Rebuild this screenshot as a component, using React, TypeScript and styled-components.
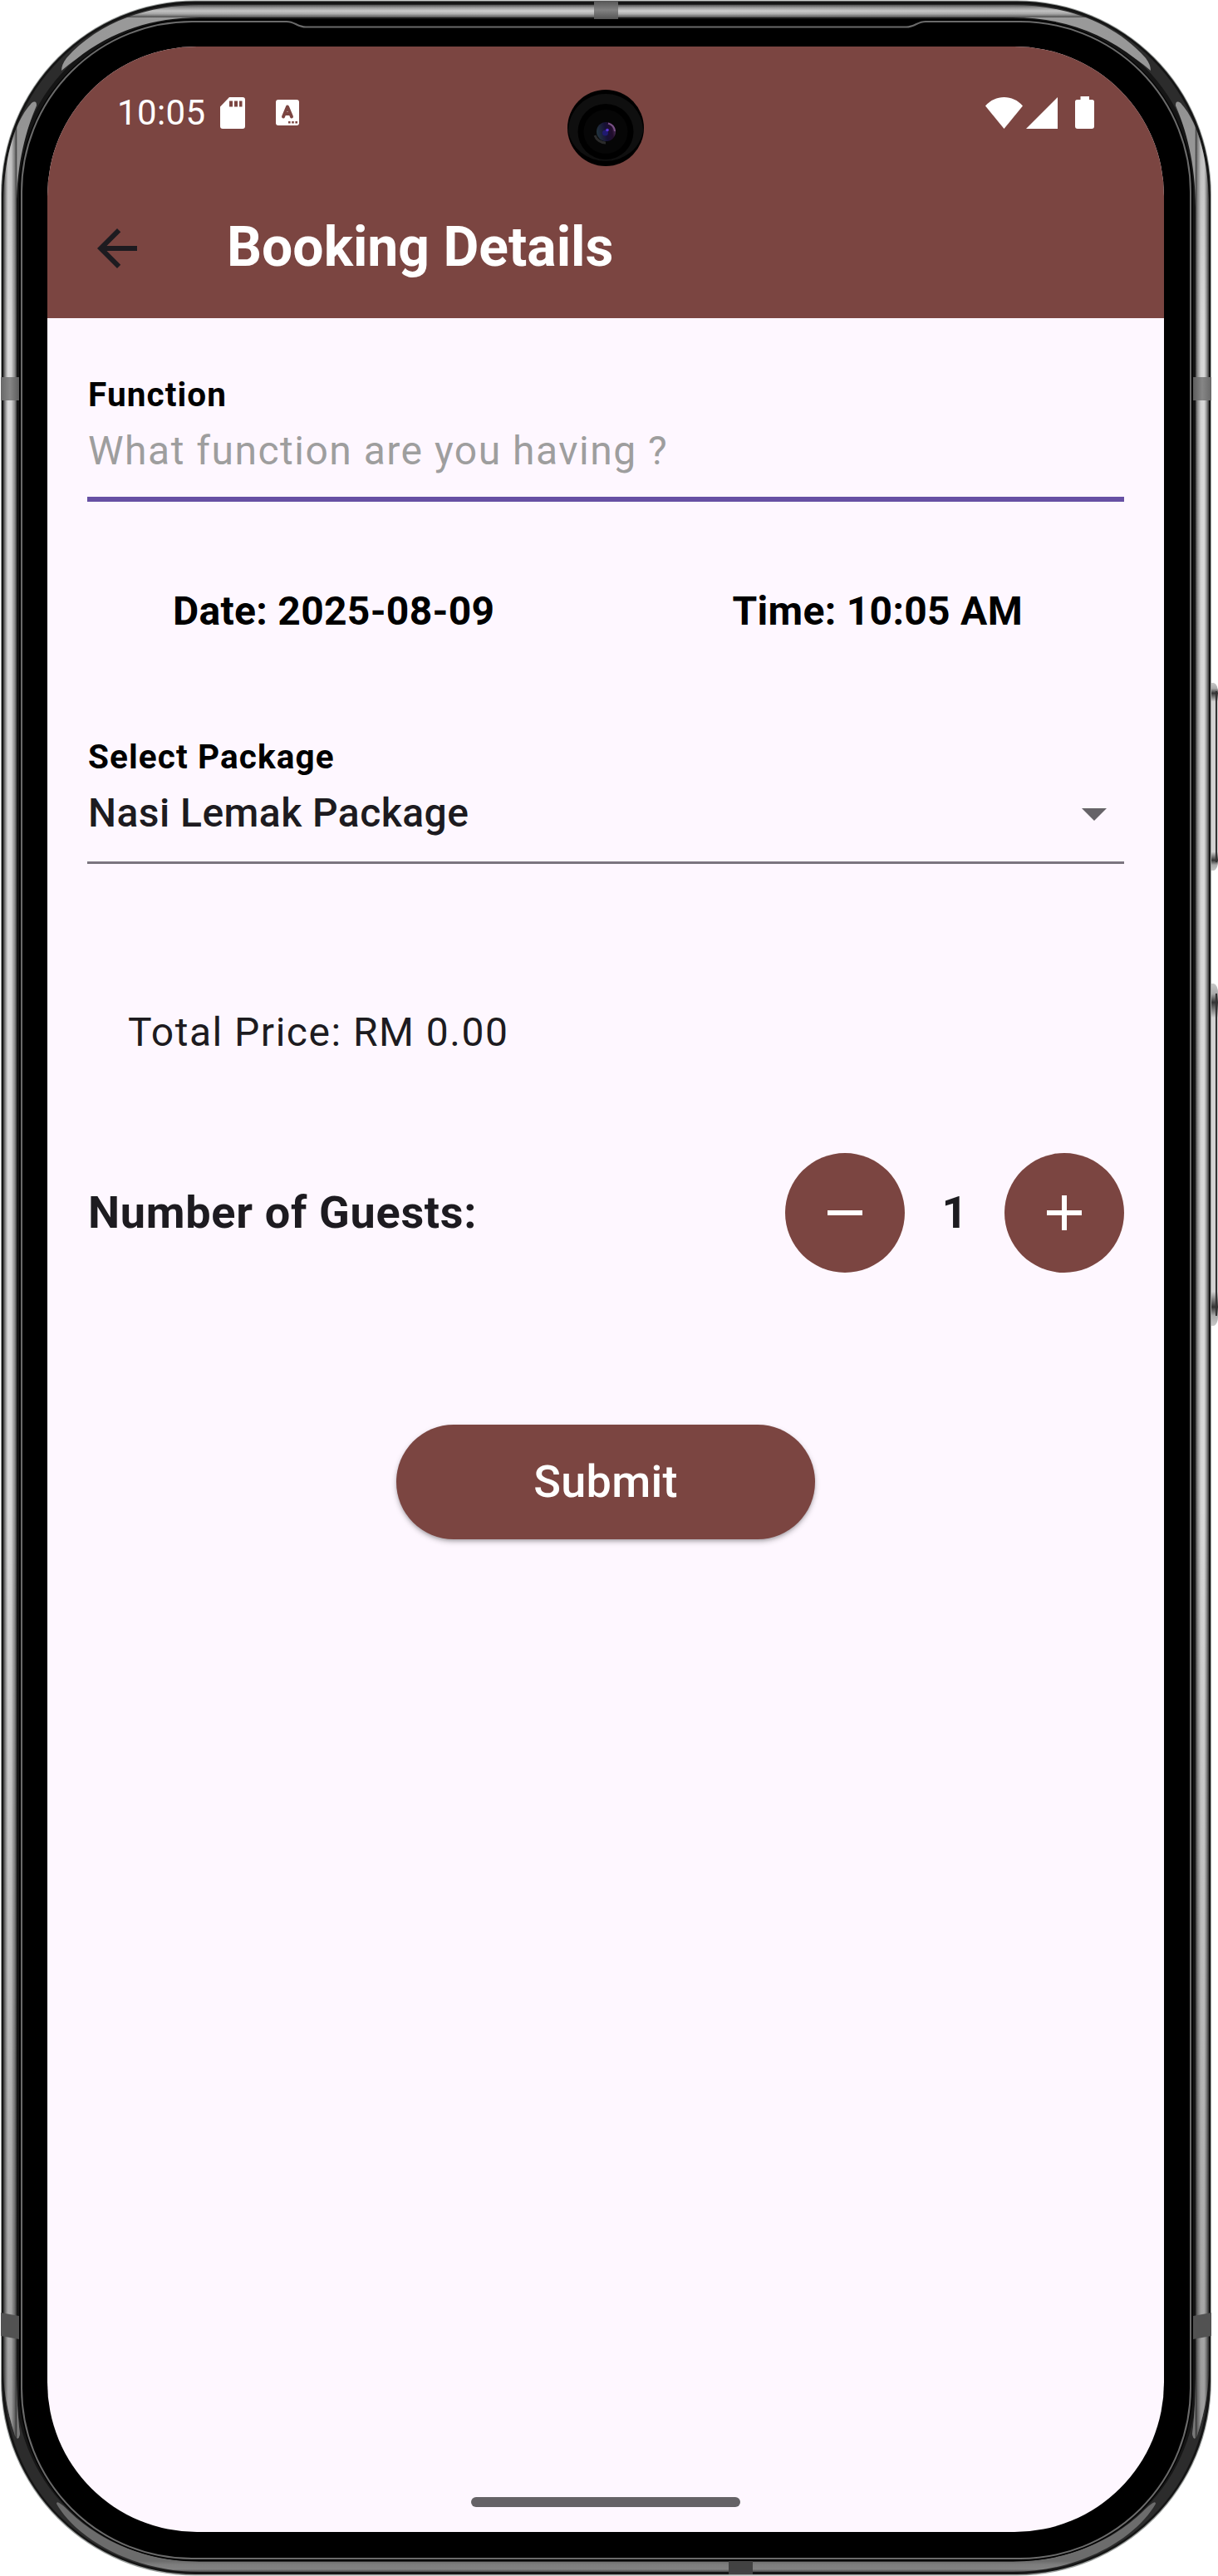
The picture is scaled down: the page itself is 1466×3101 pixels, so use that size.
import React, { useState } from "react";
import styled, { createGlobalStyle } from "styled-components";

const color = {
  brand: "#7b4541",
  surface: "#fef7ff",
  ink: "#1d1b20",
  hint: "#9e9e9e",
  focus: "#6750a4",
  outline: "#7b757f",
  icon: "#666368",
};

const GlobalStyle = createGlobalStyle`
  * { box-sizing: border-box; }
  body { margin: 0; background: #fff; }
`;

const Device = styled.div`
  position: relative;
  width: 1466px;
  height: 3101px;
  padding: 56px 65px 53px 57px;
  overflow: hidden;
  font-family: Roboto, "Liberation Sans", sans-serif;
  font-kerning: normal;
`;

const Casing = styled.svg`
  position: absolute;
  inset: 0;
  width: 1466px;
  height: 3101px;
`;

const Screen = styled.main`
  position: relative;
  display: flex;
  flex-direction: column;
  width: 1344px;
  height: 2992px;
  border-radius: 180px;
  overflow: hidden;
  background: ${color.surface};
  color: ${color.ink};
`;

const Camera = styled.svg`
  position: absolute;
  left: 626px;
  top: 52px;
  width: 92px;
  height: 92px;
`;

const Header = styled.header`
  background: ${color.brand};
  color: #fff;
`;

const StatusBar = styled.div`
  display: flex;
  align-items: center;
  height: 159px;
  padding: 0 84px;
`;

const Clock = styled.span`
  width: 124px;
  font-size: 42px;
  line-height: 50px;
  letter-spacing: 0.4px;
  white-space: nowrap;
`;

const Glyph = styled.svg<{ $w: number; $h: number; $gap?: number }>`
  display: block;
  flex: none;
  width: ${(p) => p.$w}px;
  height: ${(p) => p.$h}px;
  margin-left: ${(p) => p.$gap ?? 0}px;
`;

const Spacer = styled.div`
  flex: 1;
`;

const Toolbar = styled.div`
  display: flex;
  align-items: center;
  gap: 96px;
  height: 168px;
  padding: 0 48px;
`;

const Title = styled.h1`
  margin: 0;
  padding-bottom: 3px;
  font-size: 66px;
  font-weight: 700;
  line-height: 84px;
  white-space: nowrap;
`;

const IconButton = styled.button`
  display: flex;
  padding: 0;
  border: 0;
  background: none;
  color: ${color.ink};
`;

const Form = styled.form`
  display: flex;
  flex-direction: column;
  padding: 68px 48px 0;
`;

const Field = styled.label<{ $line: number; $tone: string; $pad: number }>`
  display: flex;
  flex-direction: column;
  gap: 8px;
  padding-bottom: ${(p) => p.$pad}px;
  border-bottom: ${(p) => p.$line}px solid ${(p) => p.$tone};
`;

const FieldLabel = styled.span`
  padding-left: 1px;
  font-size: 40.5px;
  font-weight: 700;
  line-height: 48px;
  letter-spacing: 1.1px;
  color: #000;
`;

const FieldInput = styled.input`
  display: block;
  width: 100%;
  height: 72px;
  padding: 0 0 0 1px;
  border: 0;
  outline: 0;
  background: none;
  font: 400 48px/72px Roboto, "Liberation Sans", sans-serif;
  letter-spacing: 1.5px;
  color: ${color.ink};
  &::placeholder {
    color: ${color.hint};
    opacity: 1;
  }
`;

const SelectRow = styled.span`
  display: flex;
  align-items: center;
  justify-content: space-between;
  padding-left: 1px;
  font-size: 48px;
  font-weight: 500;
  line-height: 72px;
  letter-spacing: 0.45px;
`;

const Schedule = styled.div`
  display: flex;
  justify-content: space-between;
  margin: 96px 0 115px;
  padding: 0 122px 0 103px;
`;

const ScheduleItem = styled.span`
  font-size: 48px;
  font-weight: 700;
  line-height: 72px;
  letter-spacing: 0.3px;
  white-space: nowrap;
  color: #000;
`;

const Total = styled.p`
  margin: 167px 0 109px;
  padding-left: 49px;
  font-size: 48px;
  line-height: 72px;
  letter-spacing: 1.5px;
`;

const GuestRow = styled.div`
  display: flex;
  align-items: center;
  height: 144px;
  font-size: 54px;
  font-weight: 700;
`;

const GuestLabel = styled.span`
  flex: 1;
  padding: 0 0 2px 1px;
  letter-spacing: 0.7px;
`;

const GuestCount = styled.output`
  width: 120px;
  padding-bottom: 2px;
  text-align: center;
`;

const RoundButton = styled.button`
  display: flex;
  align-items: center;
  justify-content: center;
  width: 144px;
  height: 144px;
  padding: 0;
  border: 0;
  border-radius: 50%;
  background: ${color.brand};
  color: #fff;
`;

const Submit = styled.button`
  align-self: center;
  width: 504px;
  height: 138px;
  margin-top: 183px;
  padding: 0;
  border: 0;
  border-radius: 69px;
  background: ${color.brand};
  box-shadow: 0 3px 6px rgba(0, 0, 0, 0.26), 0 2px 3px rgba(0, 0, 0, 0.1);
  color: #fff;
  font: 500 54px/64px Roboto, "Liberation Sans", sans-serif;
  letter-spacing: 0.3px;
`;

const HomeIndicator = styled.div`
  align-self: center;
  width: 324px;
  height: 12px;
  margin: auto 0 30px;
  border-radius: 6px;
  background: #656266;
`;

/* Half of the metal rim; mirrored for the opposite side. */
function RimHalf() {
  return (
    <g>
      <path d="M4 240 C5 200 14 150 38 124 Q44 120 44 127 C32 155 20 195 20 250 L20 2850 Q20 2900 24 2930 Q22 2940 18 2932 C8 2900 4 2875 4 2850 Z" fill="url(#side)" />
      <path d="M4 240 C5 200 14 150 38 124 Q44 120 44 127 C32 155 20 195 20 250 L20 2850 Q20 2900 24 2930 Q22 2940 18 2932 C8 2900 4 2875 4 2850 Z" fill="url(#sideShade)" />
      <path d="M730 6 L240 6 C180 6 120 25 80 70 Q74 78 74 85 Q82 78 92 71 C135 37 185 21 240 21 L730 21 Z" fill="url(#top)" />
      <path d="M730 6 L240 6 C180 6 120 25 80 70 Q74 78 74 85 Q82 78 92 71 C135 37 185 21 240 21 L730 21 Z" fill="url(#topShade)" />
      <path d="M730 3084 L240 3084 C170 3082 120 3058 84 3024 Q68 3008 68 3014 C92 3056 160 3096 240 3096 L730 3096 Z" fill="url(#bottom)" />
      <rect x="1" y="454" width="22" height="28" fill="url(#band)" />
      <path d="M1 2784 L23 2788 V2816 L1 2812 Z" fill="#525252" />
    </g>
  );
}

function PhoneCasing() {
  return (
    <Casing viewBox="0 0 1466 3101" aria-hidden="true">
      <defs>
        <linearGradient id="side" gradientUnits="userSpaceOnUse" x1="1" y1="0" x2="24" y2="0">
          <stop offset="0.1" stopColor="#2b2b2b" />
          <stop offset="0.28" stopColor="#a8a8a8" />
          <stop offset="0.38" stopColor="#dadada" />
          <stop offset="0.55" stopColor="#d2d2d2" />
          <stop offset="0.72" stopColor="#8c8c8c" />
          <stop offset="0.8" stopColor="#555" />
          <stop offset="0.84" stopColor="#333" />
          <stop offset="0.85" stopColor="#a6a6a6" />
        </linearGradient>
        <linearGradient id="sideShade" gradientUnits="userSpaceOnUse" x1="0" y1="120" x2="0" y2="2940">
          <stop offset="0" stopOpacity="0.12" />
          <stop offset="0.1" stopOpacity="0" />
          <stop offset="0.6" stopOpacity="0" />
          <stop offset="0.93" stopOpacity="0.22" />
          <stop offset="1" stopOpacity="0.28" />
        </linearGradient>
        <linearGradient id="top" gradientUnits="userSpaceOnUse" x1="0" y1="5" x2="0" y2="23">
          <stop offset="0" stopColor="#444" />
          <stop offset="0.25" stopColor="#a0a0a0" />
          <stop offset="0.45" stopColor="#cecece" />
          <stop offset="0.65" stopColor="#b0b0b0" />
          <stop offset="0.88" stopColor="#555" />
          <stop offset="0.9" stopColor="#a4a4a4" />
        </linearGradient>
        <linearGradient id="topShade" gradientUnits="userSpaceOnUse" x1="70" y1="0" x2="600" y2="0">
          <stop offset="0" stopOpacity="0.08" />
          <stop offset="1" stopOpacity="0" />
        </linearGradient>
        <linearGradient id="bottom" gradientUnits="userSpaceOnUse" x1="0" y1="3083" x2="0" y2="3097">
          <stop offset="0" stopColor="#6c6c6c" />
          <stop offset="0.3" stopColor="#7d7d7d" />
          <stop offset="0.7" stopColor="#828282" />
          <stop offset="1" stopColor="#3a3a3a" />
        </linearGradient>
        <linearGradient id="band" x1="0" y1="0" x2="1" y2="0">
          <stop offset="0" stopColor="#686868" />
          <stop offset="0.5" stopColor="#868686" />
          <stop offset="1" stopColor="#5c5c5c" />
        </linearGradient>
        <linearGradient id="bandTop" x1="0" y1="0" x2="0" y2="1">
          <stop offset="0" stopColor="#555" />
          <stop offset="0.5" stopColor="#828282" />
          <stop offset="1" stopColor="#555" />
        </linearGradient>
        <linearGradient id="key" x1="0" y1="0" x2="0" y2="1">
          <stop offset="0" stopColor="#c8c8c8" />
          <stop offset="0.03" stopColor="#aaa" />
          <stop offset="0.055" stopColor="#333" />
          <stop offset="0.1" stopColor="#d2d2d2" />
          <stop offset="0.9" stopColor="#d2d2d2" />
          <stop offset="0.945" stopColor="#333" />
          <stop offset="0.97" stopColor="#aaa" />
          <stop offset="1" stopColor="#c8c8c8" />
        </linearGradient>
      </defs>

      <path d="M1457 822 H1461 Q1466 824 1466 834 V1036 Q1466 1046 1461 1048 H1457 Z" fill="url(#key)" />
      <path d="M1464 832 V1038" stroke="#333" strokeWidth="2" />
      <path d="M1457 1184 H1461 Q1466 1186 1466 1196 V1584 Q1466 1594 1461 1596 H1457 Z" fill="url(#key)" />
      <path d="M1464 1196 V1584" stroke="#333" strokeWidth="2" />

      <rect x="1" y="0.5" width="1457" height="3100" rx="234" fill="#9a9e9c" />
      <rect x="2" y="1.5" width="1455" height="3097.5" rx="233" fill="#151515" />
      <rect x="12" y="11.5" width="1435" height="3078" rx="221" fill="none" stroke="#2c2c2c" strokeWidth="13" />
      <RimHalf />
      <g transform="translate(1459 0) scale(-1 1)">
        <RimHalf />
      </g>
      <rect x="715" y="1" width="29" height="22" fill="url(#bandTop)" />
      <rect x="877" y="3083" width="29" height="16" fill="#424242" />
      <rect x="23" y="23" width="1413" height="3060" rx="210" fill="#000" />
      <path
        d="M26 231 A205 205 0 0 1 231 26 H345 C355 26 358 32.5 368 32.5 H1091 C1101 32.5 1104 26 1114 26 H1228 A205 205 0 0 1 1433 231 V2875 A205 205 0 0 1 1228 3080 H231 A205 205 0 0 1 26 2875 Z"
        fill="none"
        stroke="#6a6a6a"
        strokeWidth="2"
      />
    </Casing>
  );
}

function PunchHole() {
  return (
    <Camera viewBox="683 108 92 92" aria-hidden="true">
      <defs>
        <linearGradient id="lens" x1="0" y1="0.6" x2="1" y2="0.4">
          <stop offset="0" stopColor="#22363f" />
          <stop offset="0.5" stopColor="#161035" />
          <stop offset="0.8" stopColor="#220d2c" />
          <stop offset="1" stopColor="#4c2e57" />
        </linearGradient>
      </defs>
      <circle cx="729" cy="154" r="46" fill="#000" />
      <path d="M684 158 A45 45 0 0 1 774 158 A45.5 42 0 0 1 684 158 Z" fill="#0f0f0f" />
      <circle cx="729" cy="158.5" r="33.5" fill="#000" />
      <circle cx="729" cy="158.5" r="26.5" fill="#060606" />
      <path d="M716 163 A13.5 13.5 0 0 0 729 172" fill="none" stroke="#2b2b2b" strokeWidth="3" />
      <circle cx="729.5" cy="158.5" r="11.5" fill="url(#lens)" />
      <path d="M732 148.5 A11 11 0 0 1 740 158" fill="none" stroke="#7a5286" strokeWidth="2" />
      <circle cx="728.5" cy="160" r="3.5" fill="#1f1a70" />
      <circle cx="731" cy="156.5" r="1.8" fill="#5a35d8" />
    </Camera>
  );
}

export default function App() {
  const [guests, setGuests] = useState(1);
  const [fn, setFn] = useState("");

  return (
    <>
      <GlobalStyle />
      <Device>
        <PhoneCasing />
        <Screen>
          <Header>
            <StatusBar>
              <Clock>10:05</Clock>
              <Glyph $w={30} $h={38} viewBox="0 0 30 38">
                <path fillRule="evenodd" fill="#fff" d="M11 0H27a3 3 0 0 1 3 3V35a3 3 0 0 1-3 3H3a3 3 0 0 1-3-3V11.500ZM11 4.500V11.500H15V4.500ZM17 4.500V11.500H21V4.500ZM23 4.500V11.500H26.500V4.500Z" />
              </Glyph>
              <Glyph $w={28} $h={31} $gap={37} viewBox="0 0 28 31">
                <rect width="28" height="31" rx="3" fill="#fff" />
                <path d="M9 20.500L14 8.500L19 20.500M11 17H17" fill="none" stroke={color.brand} strokeWidth="4" strokeLinecap="round" strokeLinejoin="round" />
                <path d="M15 26h2.600v2.600H15zM19.200 26h2.600v2.600h-2.600zM23.400 26H26v2.600h-2.600z" fill={color.brand} />
              </Glyph>
              <Spacer />
              <Glyph $w={45} $h={38} viewBox="0 0 45 38">
                <path fill="#fff" d="M22.500 38L0 10.500C6 3.500 14 0 22.500 0S39 3.500 45 10.500Z" />
              </Glyph>
              <Glyph $w={38} $h={38} $gap={4} viewBox="0 0 38 38">
                <path fill="#fff" d="M0 38L38 0V38Z" />
              </Glyph>
              <Glyph $w={23} $h={39} $gap={21} viewBox="0 0 23 39">
                <path fill="#fff" d="M6.500 0H17V4H20.500a2.500 2.500 0 0 1 2.500 2.500V36a3 3 0 0 1-3 3H3a3 3 0 0 1-3-3V6.500A2.500 2.500 0 0 1 2.500 4H6.500Z" />
              </Glyph>
            </StatusBar>
            <Toolbar>
              <IconButton type="button" aria-label="Back">
                <Glyph $w={72} $h={72} viewBox="0 0 24 24">
                  <path fill="currentColor" d="M20 11H7.830l5.590-5.590L12 4l-8 8 8 8 1.410-1.410L7.830 13H20v-2z" />
                </Glyph>
              </IconButton>
              <Title>Booking Details</Title>
            </Toolbar>
          </Header>

          <Form onSubmit={(e) => e.preventDefault()}>
            <Field $line={6} $tone={color.focus} $pad={19}>
              <FieldLabel>Function</FieldLabel>
              <FieldInput
                placeholder="What function are you having ?"
                value={fn}
                onChange={(e) => setFn(e.target.value)}
              />
            </Field>

            <Schedule>
              <ScheduleItem>Date: 2025-08-09</ScheduleItem>
              <ScheduleItem>Time: 10:05 AM</ScheduleItem>
            </Schedule>

            <Field as="div" $line={3} $tone={color.outline} $pad={22}>
              <FieldLabel>Select Package</FieldLabel>
              <SelectRow>
                Nasi Lemak Package
                <Glyph $w={72} $h={72} viewBox="0 0 24 24">
                  <path fill={color.icon} d="M7 10l5 5 5-5z" />
                </Glyph>
              </SelectRow>
            </Field>

            <Total>Total Price: RM 0.00</Total>

            <GuestRow>
              <GuestLabel>Number of Guests:</GuestLabel>
              <RoundButton type="button" aria-label="Fewer guests" onClick={() => setGuests((n) => Math.max(1, n - 1))}>
                <Glyph $w={72} $h={72} viewBox="0 0 24 24">
                  <path fill="currentColor" d="M19 13H5v-2h14v2z" />
                </Glyph>
              </RoundButton>
              <GuestCount>{guests}</GuestCount>
              <RoundButton type="button" aria-label="More guests" onClick={() => setGuests((n) => n + 1)}>
                <Glyph $w={72} $h={72} viewBox="0 0 24 24">
                  <path fill="currentColor" d="M19 13h-6v6h-2v-6H5v-2h6V5h2v6h6v2z" />
                </Glyph>
              </RoundButton>
            </GuestRow>

            <Submit type="submit">Submit</Submit>
          </Form>

          <HomeIndicator />
          <PunchHole />
        </Screen>
      </Device>
    </>
  );
}
